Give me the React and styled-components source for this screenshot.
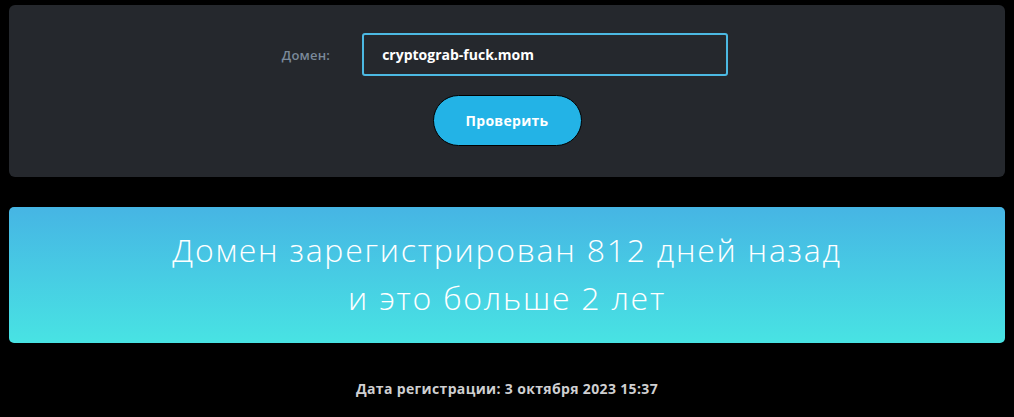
import React from 'react'
import styled, { createGlobalStyle } from 'styled-components'

const GlobalStyle = createGlobalStyle`
  html, body {
    margin: 0;
    padding: 0;
    background: #000;
  }

  body {
    font-family: 'Open Sans', 'Noto Sans', sans-serif;
  }
`

const Page = styled.div`
  padding: 5px 9px 0 9px;
`

const FormCard = styled.form`
  background-color: #25282d;
  border-radius: 6px;
  padding: 28px 0 31px;
  display: flex;
  flex-direction: column;
  align-items: center;
`

const Row = styled.div`
  display: flex;
  align-items: center;
  gap: 32px;
  margin-left: -4px;
`

const Label = styled.label`
  font-size: 13px;
  font-weight: 600;
  color: #7b8a9a;
  letter-spacing: 0.2px;
`

const Input = styled.input`
  box-sizing: border-box;
  width: 366px;
  height: 43px;
  padding: 0 18px;
  background: #25282d;
  border: 2px solid #4cb9e2;
  border-radius: 3px;
  outline: none;
  color: #fff;
  font-family: inherit;
  font-size: 14px;
  font-weight: 700;
`

const Button = styled.button`
  box-sizing: border-box;
  margin-top: 19px;
  width: 149px;
  height: 51px;
  border: 1px solid #000;
  border-radius: 26px;
  background-color: #23b3e6;
  color: #fff;
  font-family: inherit;
  font-size: 14px;
  font-weight: 700;
  letter-spacing: 0.3px;
  cursor: pointer;
`

const Result = styled.div`
  margin-top: 30px;
  border-radius: 5px;
  padding: 19px 0 21px;
  background: linear-gradient(180deg, #46b5e4 0%, #48e3e3 100%);
  color: #fff;
  text-align: center;
  font-size: 32px;
  font-weight: 300;
  letter-spacing: 1.75px;
  line-height: 48px;
`

const RegDate = styled.div`
  margin-top: 36px;
  text-align: center;
  color: #cfcfd1;
  font-size: 14px;
  font-weight: 700;
  letter-spacing: 0.35px;
  line-height: 20px;
`

const App = () => {
  const domain = 'cryptograb-fuck.mom'
  const days = 812
  const years = 2

  return (
    <Page>
      <GlobalStyle />
      <FormCard onSubmit={e => e.preventDefault()}>
        <Row>
          <Label htmlFor="domain">Домен:</Label>
          <Input id="domain" defaultValue={domain} />
        </Row>
        <Button type="submit">Проверить</Button>
      </FormCard>
      <Result>
        Домен зарегистрирован {days} дней назад
        <br />
        и это больше {years} лет
      </Result>
      <RegDate>Дата регистрации: 3 октября 2023 15:37</RegDate>
    </Page>
  )
}

export default App
